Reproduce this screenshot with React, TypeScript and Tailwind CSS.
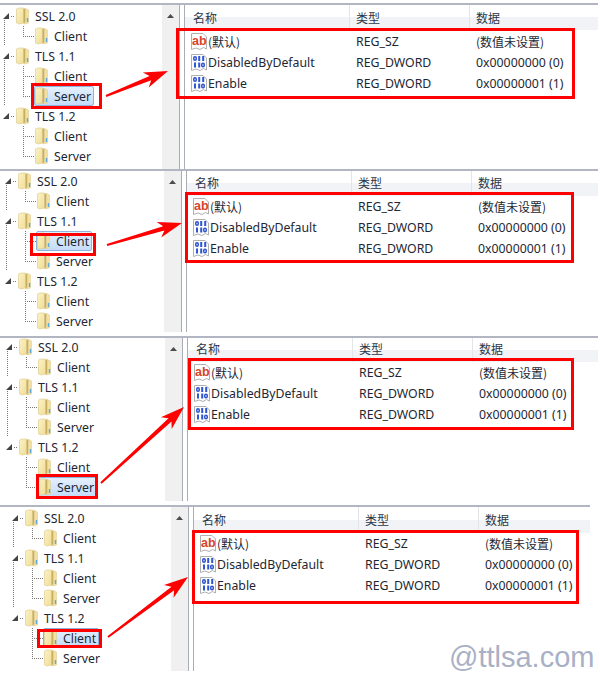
const cjk = '"Noto Sans CJK SC", "Noto Sans", sans-serif';

interface PanelConfig {
  id: string;
  box: string;
  tree: string;
  head: string;
  rows: string;
  selected: string;
}

const panels: PanelConfig[] = [
  { id: 'a', box: 'mt-[3px] h-[166px] w-[598px]', tree: 'w-[162px] pt-px', head: 'h-[25px] leading-[26px]', rows: 'mt-px', selected: 'tls11-server' },
  { id: 'b', box: 'h-[163px] mb-[4px] w-[598px]', tree: 'w-[164px] pl-[2px]', head: 'h-[25px] leading-[24px]', rows: 'mt-0', selected: 'tls11-client' },
  { id: 'c', box: 'h-[165px] mb-[4px] w-[598px]', tree: 'w-[165px] pl-[3px] -mt-px', head: 'h-[24px] leading-[22px]', rows: 'mt-0', selected: 'tls12-server' },
  { id: 'd', box: 'h-[166px] w-[590px]', tree: 'w-[171px] pl-[9px] pt-px', head: 'h-[26px] leading-[26px]', rows: 'mt-0', selected: 'tls12-client' },
];

function Folder() {
  return (
    <svg width="13" height="18" viewBox="0 0 13 18" className="shrink-0">
      <defs>
        <linearGradient id="folderLeft" x1="0" y1="0" x2="1" y2="1">
          <stop offset="0" stopColor="#fbf3c6" />
          <stop offset="1" stopColor="#f0dd96" />
        </linearGradient>
      </defs>
      <path d="M0.5 2 L3 1 L7.5 1 L7.5 16 L3 17 L0.5 16 Z" fill="url(#folderLeft)" stroke="#dcc886" strokeWidth="0.6" />
      <path d="M7.5 2 L9.5 1 L9.5 15 L7.5 17 Z" fill="#c9ae62" />
      <path d="M9.5 1.5 L12.5 3 L12.5 16 L8 17 L9.5 15 Z" fill="#f1e09f" stroke="#dcc886" strokeWidth="0.5" />
      <rect x="10.8" y="11" width="1.4" height="4" fill="#5fa9dc" />
    </svg>
  );
}

function Connector({ kind, trunk, last }: { kind: 'parent' | 'child'; trunk?: boolean; last?: boolean }) {
  if (kind === 'parent') {
    return (
      <svg width="15" height="20" className="shrink-0">
        {trunk && <line x1="4.5" y1="14" x2="4.5" y2="20" stroke="#777" strokeDasharray="1 1" />}
        <line x1="11" y1="10.5" x2="15" y2="10.5" stroke="#777" strokeDasharray="1 1" />
        <polygon points="9,7 9,13 3,13" fill="#444" />
      </svg>
    );
  }
  return (
    <svg width="34" height="20" className="shrink-0">
      {trunk && <line x1="4.5" y1="0" x2="4.5" y2="20" stroke="#777" strokeDasharray="1 1" />}
      <line x1="23.5" y1="0" x2="23.5" y2={last ? 10 : 20} stroke="#777" strokeDasharray="1 1" />
      <line x1="23" y1="10.5" x2="34" y2="10.5" stroke="#777" strokeDasharray="1 1" />
    </svg>
  );
}

function TreeRow({
  label,
  kind,
  trunk,
  last,
  selected,
}: {
  label: string;
  kind: 'parent' | 'child';
  trunk?: boolean;
  last?: boolean;
  selected?: boolean;
}) {
  return (
    <div className="flex h-5 items-center">
      <Connector kind={kind} trunk={trunk} last={last} />
      <div
        className={
          selected
            ? 'flex h-5 items-center gap-[6px] rounded-[2px] border border-[#8fb4dc] bg-gradient-to-b from-[#e4f0fd] to-[#c4dcfa] pr-[2px]'
            : 'flex h-5 items-center gap-[6px] border border-transparent pr-[2px]'
        }
      >
        <Folder />
        <span className="whitespace-nowrap pt-[2px] text-[#1d2733]">{label}</span>
      </div>
    </div>
  );
}

function Tree({ selected, className }: { selected: string; className: string }) {
  return (
    <div className={`shrink-0 ${className}`}>
      <TreeRow label="SSL 2.0" kind="parent" trunk />
      <TreeRow label="Client" kind="child" trunk last />
      <TreeRow label="TLS 1.1" kind="parent" trunk />
      <TreeRow label="Client" kind="child" trunk selected={selected === 'tls11-client'} />
      <TreeRow label="Server" kind="child" trunk last selected={selected === 'tls11-server'} />
      <TreeRow label="TLS 1.2" kind="parent" />
      <TreeRow label="Client" kind="child" selected={selected === 'tls12-client'} />
      <TreeRow label="Server" kind="child" last selected={selected === 'tls12-server'} />
    </div>
  );
}

function PaperIcon({ children }: { children: React.ReactNode }) {
  return (
    <svg width="16" height="18" viewBox="0 0 16 18" className="shrink-0">
      <path
        d="M0.5 0.5 H12 L15.5 4 V16 L12.5 14.5 L9 16.5 L5 15 L0.5 16.5 Z"
        fill="#fdfdfd"
        stroke="#b0b0b0"
      />
      {children}
    </svg>
  );
}

function StringIcon() {
  return (
    <PaperIcon>
      <text x="1" y="12" fontSize="12.5" fontWeight="700" fontFamily='"Liberation Sans", sans-serif' fill="#d8452a">
        ab
      </text>
    </PaperIcon>
  );
}

function BinaryIcon() {
  return (
    <PaperIcon>
      <g fill="none" stroke="#2f55d0" strokeWidth="1.5">
        <rect x="2.75" y="2.75" width="2.5" height="3.5" rx="1.2" />
        <rect x="10.75" y="9.25" width="2.5" height="3.5" rx="1.2" />
      </g>
      <g fill="#2f55d0">
        <rect x="7.2" y="2" width="2" height="5" />
        <rect x="11.2" y="2" width="2" height="5" />
        <rect x="3" y="8.5" width="2" height="5" />
        <rect x="7.2" y="8.5" width="2" height="5" />
      </g>
    </PaperIcon>
  );
}

const columns = 'grid grid-cols-[164px_120px_1fr]';

function ValueRow({
  icon,
  name,
  type,
  data,
  zh,
}: {
  icon: React.ReactNode;
  name: string;
  type: string;
  data: string;
  zh?: boolean;
}) {
  return (
    <div className={`${columns} h-[21px] items-center text-[#1d2733]`}>
      <div className="flex items-center gap-[1px] pl-[6px]">
        {icon}
        <span className={zh ? 'text-[12px]' : 'pt-[2px]'} style={zh ? { fontFamily: cjk } : undefined}>
          {name}
        </span>
      </div>
      <span className="pl-[7px] pt-[2px]">{type}</span>
      <span className={zh ? 'pl-[7px] text-[12px]' : 'pl-[7px] pt-[2px]'} style={zh ? { fontFamily: cjk } : undefined}>
        {data}
      </span>
    </div>
  );
}

function Panel({ config }: { config: PanelConfig }) {
  return (
    <div className={`flex shrink-0 border-t-2 border-[#b2b6c2] ${config.box}`}>
      <Tree selected={config.selected} className={config.tree} />
      {/* Scrollbar */}
      <div className="flex w-[17px] shrink-0 justify-center bg-[#f0f0f0] pt-[9px]">
        <svg width="7" height="4">
          <polygon points="3.5,0 7,4 0,4" fill="#4c4c4c" />
        </svg>
      </div>
      {/* Splitter */}
      <div className="w-[6px] shrink-0 border-x border-[#a9adb6] bg-white" />
      {/* Values */}
      <div className="min-w-0 flex-1">
        <div
          className={`${columns} ${config.head} bg-gradient-to-b from-white from-50% to-[#f1f3f6] to-50% text-[12px] text-[#2a3648]`}
          style={{ fontFamily: cjk }}
        >
          <span className="pl-[8px]">名称</span>
          <span className="border-l border-[#e3e5e8] pl-[6px]">类型</span>
          <span className="border-l border-[#e3e5e8] pl-[6px]">数据</span>
        </div>
        <div className={config.rows}>
          <ValueRow icon={<StringIcon />} name="(默认)" type="REG_SZ" data="(数值未设置)" zh />
          <ValueRow icon={<BinaryIcon />} name="DisabledByDefault" type="REG_DWORD" data="0x00000000 (0)" />
          <ValueRow icon={<BinaryIcon />} name="Enable" type="REG_DWORD" data="0x00000001 (1)" />
        </div>
      </div>
    </div>
  );
}

function Arrow({ x1, y1, x2, y2 }: { x1: number; y1: number; x2: number; y2: number }) {
  const a = Math.atan2(y2 - y1, x2 - x1);
  const ux = Math.cos(a);
  const uy = Math.sin(a);
  const px = -uy;
  const py = ux;
  // barbs swept back from the tip, shaft joins a little ahead of them
  const bx = x2 - ux * 24;
  const by = y2 - uy * 24;
  const jx = x2 - ux * 19;
  const jy = y2 - uy * 19;
  const pts = [
    [x1 + px, y1 + py],
    [jx + px * 2.2, jy + py * 2.2],
    [bx + px * 8, by + py * 8],
    [x2, y2],
    [bx - px * 8, by - py * 8],
    [jx - px * 2.2, jy - py * 2.2],
    [x1 - px, y1 - py],
  ];
  return <polygon points={pts.map((p) => p.join(',')).join(' ')} fill="#ff0000" />;
}

const redBox = 'absolute border-[3px] border-[#ff0000]';

export default function App() {
  return (
    <div
      className="relative h-[677px] w-[600px] overflow-hidden bg-white text-[12.3px] leading-none"
      style={{ fontFamily: '"Noto Sans", sans-serif' }}
    >
      {panels.map((p) => (
        <Panel key={p.id} config={p} />
      ))}

      {/* Red annotations */}
      <div className={`${redBox} left-[31px] top-[83px] h-[26px] w-[71px]`} />
      <div className={`${redBox} left-[176px] top-[28px] h-[71px] w-[399px]`} />
      <div className={`${redBox} left-[30px] top-[233px] h-[23px] w-[66px]`} />
      <div className={`${redBox} left-[185px] top-[192px] h-[71px] w-[389px]`} />
      <div className={`${redBox} left-[36px] top-[474px] h-[25px] w-[62px]`} />
      <div className={`${redBox} left-[188px] top-[358px] h-[72px] w-[386px]`} />
      <div className={`${redBox} left-[37px] top-[629px] h-[19px] w-[65px]`} />
      <div className={`${redBox} left-[192px] top-[530px] h-[74px] w-[387px]`} />

      <svg width="600" height="677" className="pointer-events-none absolute left-0 top-0">
        <Arrow x1={106} y1={96} x2={168} y2={71} />
        <Arrow x1={107} y1={245} x2={182} y2={223} />
        <Arrow x1={101} y1={483} x2={184} y2={407} />
        <Arrow x1={108} y1={637} x2={188} y2={577} />
      </svg>

      {/* Watermark */}
      <span
        className="absolute left-[449px] top-[640px] text-[29px] leading-[34px] text-[#a9b0c6]"
        style={{ fontFamily: '"Liberation Sans", Arial, sans-serif' }}
      >
        @ttlsa.com
      </span>
    </div>
  );
}
